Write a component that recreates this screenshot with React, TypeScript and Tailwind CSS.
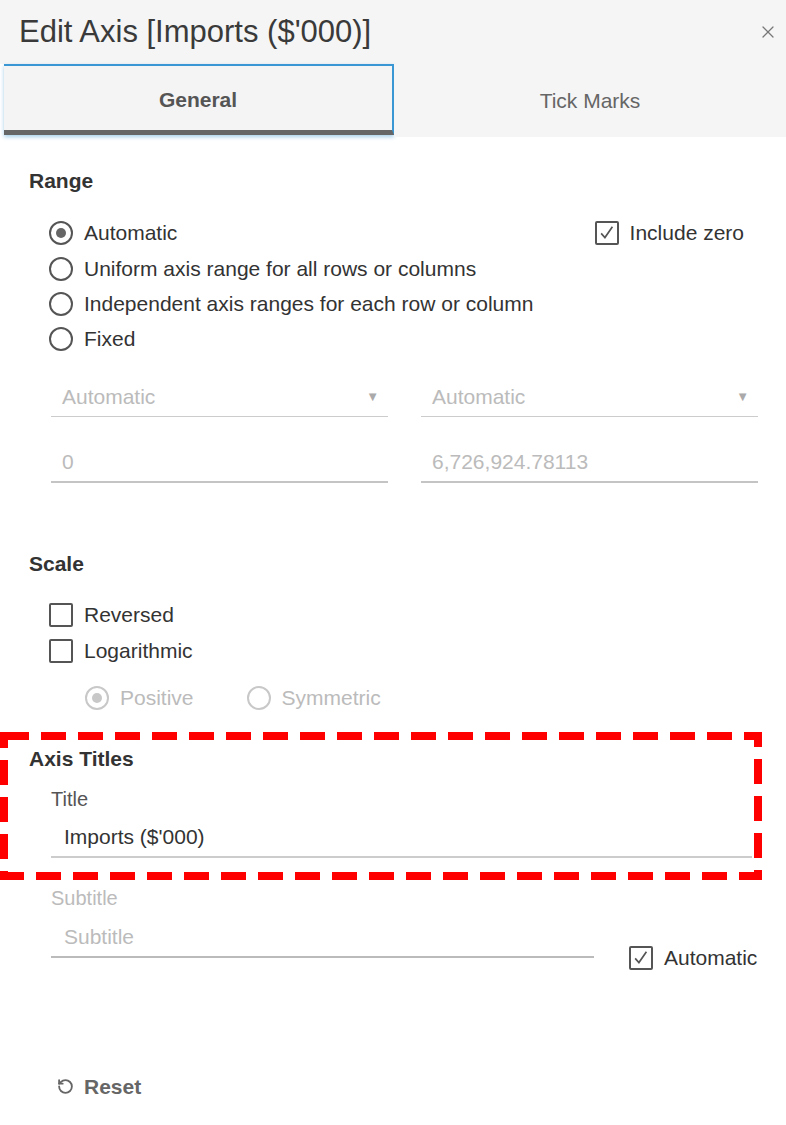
import { X, RotateCcw } from "lucide-react";

function Radio({ label, checked, disabled }: { label: string; checked?: boolean; disabled?: boolean }) {
  return (
    <div className="flex h-[35px] items-center">
      <span
        className={`flex h-[24px] w-[24px] shrink-0 items-center justify-center rounded-full border-2 ${
          disabled ? "border-[#c8c8c8]" : "border-[#555]"
        }`}
      >
        {checked && (
          <span className={`h-[10px] w-[10px] rounded-full ${disabled ? "bg-[#c8c8c8]" : "bg-[#666]"}`} />
        )}
      </span>
      <span className={`ml-[11px] text-[21px] ${disabled ? "text-[#bbb]" : "text-[#333]"}`}>{label}</span>
    </div>
  );
}

function Checkbox({ label, checked }: { label: string; checked?: boolean }) {
  return (
    <div className="flex h-[36px] items-center">
      <span className="flex h-[24px] w-[24px] shrink-0 items-center justify-center rounded-[2px] border-2 border-[#555]">
        {checked && (
          <svg viewBox="0 0 24 24" className="h-[20px] w-[20px]">
            <path d="M5 12.5l4.5 5L18.5 4.5" fill="none" stroke="#555" strokeWidth="2" />
          </svg>
        )}
      </span>
      <span className="ml-[11px] text-[21px] text-[#333]">{label}</span>
    </div>
  );
}

function Field({ value, select, line = "border-b border-[#ccc]" }: { value: string; select?: boolean; line?: string }) {
  return (
    <div className={`flex h-[40px] items-center pl-[11px] pr-[9px] ${line}`}>
      <span className="flex-1 text-[21px] text-[#bbb]">{value}</span>
      {select && <span className="text-[13px] text-[#aaa]">▼</span>}
    </div>
  );
}

export default function App() {
  return (
    <div className="relative h-[1125px] w-[786px] overflow-hidden bg-white font-['Liberation_Sans',Arial,sans-serif]">
      {/* header */}
      <div className="flex h-[64px] items-center justify-between bg-[#f5f5f5] pl-[19px] pr-[8px]">
        <h1 className="text-[31px] font-light text-[#3a3a3a]">Edit Axis [Imports ($'000)]</h1>
        <X className="h-[20px] w-[20px] text-[#777]" strokeWidth={1.5} />
      </div>

      {/* tabs */}
      <div className="flex h-[73px]">
        <div className="w-[4px] bg-white" />
        <div className="flex h-[71px] w-[390px] items-center justify-center border-t-2 border-r-2 border-[#3b97d3] border-b-[5px] border-b-[#666] bg-[#f4f4f4] pt-[4px] shadow-[0_2px_4px_rgba(59,151,211,0.45)]">
          <span className="text-[21px] font-bold text-[#555]">General</span>
        </div>
        <div className="flex flex-1 items-center justify-center bg-[#f5f5f5]">
          <span className="text-[21px] text-[#666]">Tick Marks</span>
        </div>
      </div>

      <div className="pl-[29px] pr-[28px]">
        {/* Range */}
        <h2 className="mt-[32px] text-[21px] font-bold leading-[24px] text-[#333]">Range</h2>
        <div className="ml-[20px] mt-[22px]">
          <div className="flex items-center">
            <Radio label="Automatic" checked />
            <div className="ml-auto mr-[14px]">
              <Checkbox label="Include zero" checked />
            </div>
          </div>
          <Radio label="Uniform axis range for all rows or columns" />
          <Radio label="Independent axis ranges for each row or column" />
          <Radio label="Fixed" />
        </div>
        <div className="ml-[22px] mt-[21px] grid grid-cols-2 gap-x-[33px] gap-y-[26px]">
          <Field value="Automatic" select />
          <Field value="Automatic" select />
          <Field value="0" line="border-b-2 border-[#c4c4c4]" />
          <Field value="6,726,924.78113" line="border-b-2 border-[#c4c4c4]" />
        </div>

        {/* Scale */}
        <h2 className="mt-[69px] text-[21px] font-bold leading-[24px] text-[#333]">Scale</h2>
        <div className="ml-[20px] mt-[21px]">
          <Checkbox label="Reversed" />
          <Checkbox label="Logarithmic" />
          <div className="ml-[36px] mt-[11px] flex gap-[53px]">
            <Radio label="Positive" checked disabled />
            <Radio label="Symmetric" disabled />
          </div>
        </div>

        {/* Axis titles */}
        <h2 className="mt-[32px] text-[21px] font-bold leading-[24px] text-[#333]">Axis Titles</h2>
        <div className="ml-[22px] mt-[16px] text-[20px] leading-[24px] text-[#555]">Title</div>
        <div className="ml-[22px] mr-[6px] mt-[7px] flex h-[40px] items-center border-b-2 border-[#ccc] pl-[13px] text-[21px] text-[#333]">
          Imports ($'000)
        </div>
        <div className="ml-[22px] mt-[28px] text-[20px] leading-[24px] text-[#bbb]">Subtitle</div>
        <div className="ml-[22px] mt-[8px] flex items-end">
          <div className="flex h-[40px] w-[543px] items-center border-b-2 border-[#bbb] pl-[13px] text-[21px] text-[#bbb]">
            Subtitle
          </div>
          <div className="ml-[35px] mb-[-18px]">
            <Checkbox label="Automatic" checked />
          </div>
        </div>

        {/* Reset */}
        <div className="ml-[28px] mt-[113px] flex items-center gap-[10px]">
          <RotateCcw className="h-[17px] w-[17px] text-[#666]" strokeWidth={2.6} />
          <span className="text-[21px] font-bold text-[#666]">Reset</span>
        </div>
      </div>

      {/* annotation box */}
      <svg className="absolute left-0 top-[732px] h-[148px] w-[762px]" viewBox="0 0 762 148">
        <rect x="4" y="4" width="754" height="140" fill="none" stroke="#ff0000" strokeWidth="8" strokeDasharray="25 12" />
      </svg>
    </div>
  );
}
